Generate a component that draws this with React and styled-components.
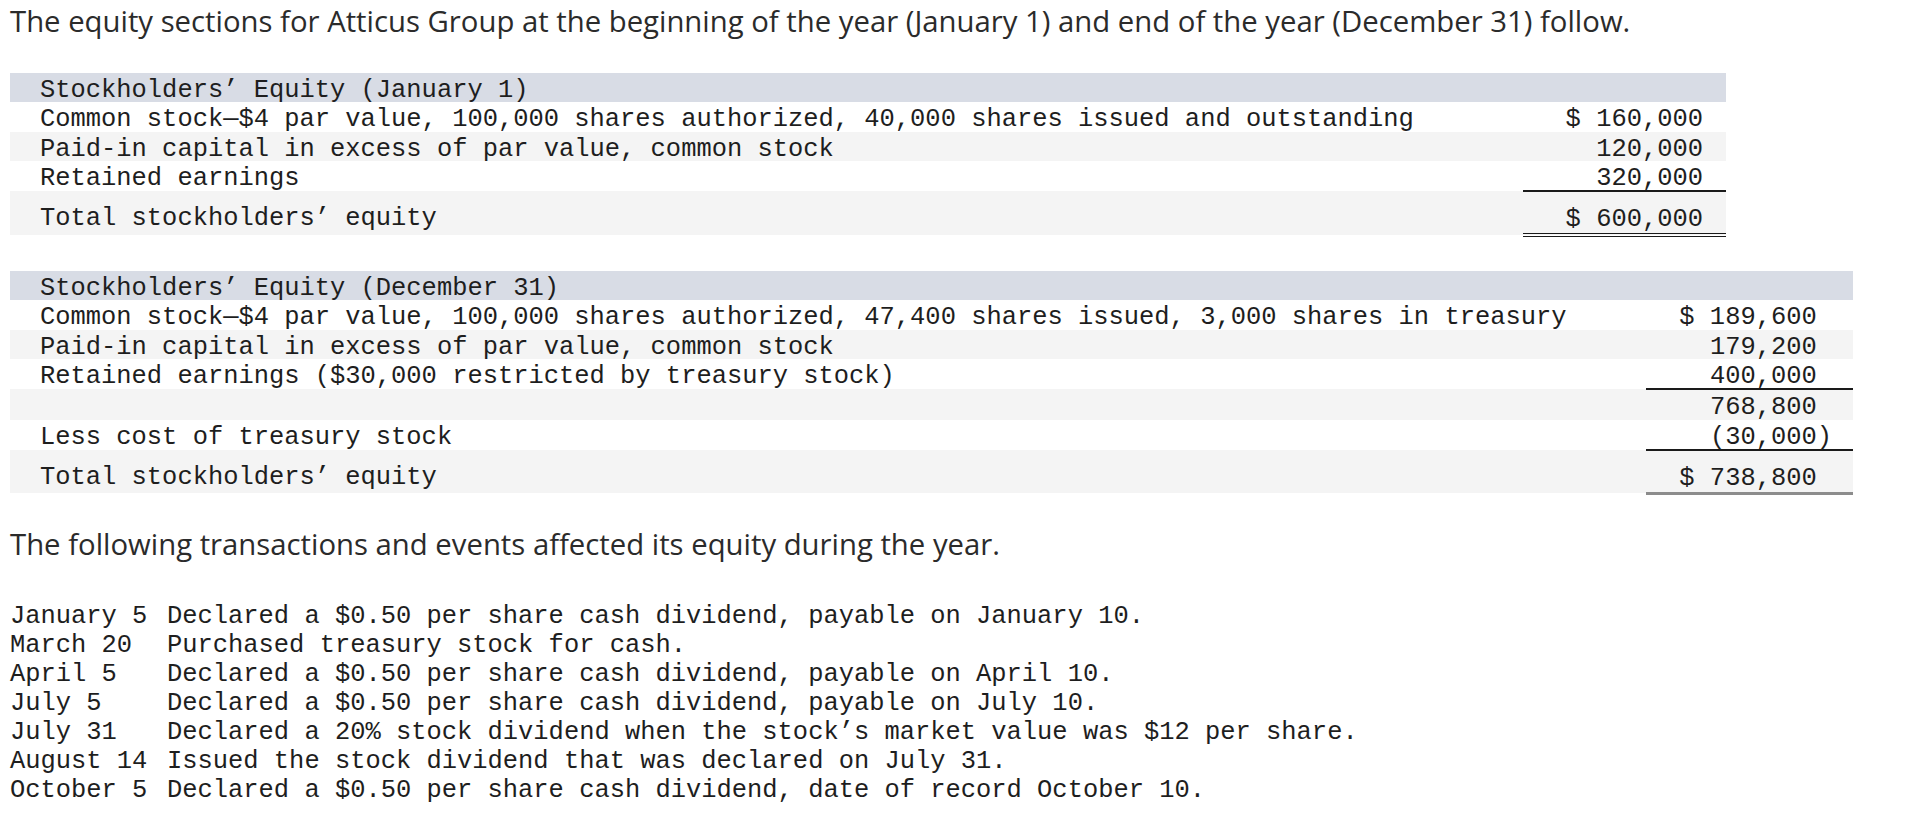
import React from 'react'
import styled, { createGlobalStyle } from 'styled-components'

const GlobalStyle = createGlobalStyle`
    body {
        margin: 0;
        background: #fff;
    }
`

const Page = styled.div`
    padding: 4px 10px 20px 10px;
    color: #222;
`

const Lead = styled.p`
    margin: 0;
    font-family: 'Open Sans', Lato, sans-serif;
    font-size: 29.3px;
    line-height: 34px;
    color: #2b2b2b;
`

const Intro = styled(Lead)`
    margin-top: 32px;
`

const Sheet = styled.table`
    margin-top: ${p => p.$top}px;
    border-collapse: collapse;
    font-family: 'Liberation Mono', 'Courier New', monospace;
    font-size: 25.45px;
    line-height: 23.3px;
    color: #1e1e1e;
`

const Row = styled.tr`
    background: ${p => (p.$head ? '#d8dce5' : p.$shade ? '#f4f4f4' : '#fff')};
`

const Label = styled.td`
    box-sizing: border-box;
    width: ${p => p.$width}px;
    padding: ${p => (p.$total ? '16px 0 1.7px 30px' : '6px 0 0 30px')};
    white-space: pre;
    vertical-align: top;
`

const Amount = styled.td`
    box-sizing: border-box;
    width: ${p => p.$width}px;
    padding: ${p => (p.$total ? '16px' : '6px')} ${p => p.$right}px ${p => (p.$total ? '1.7px' : '0')} 0;
    text-align: right;
    white-space: pre;
    vertical-align: top;
    border-bottom: ${p =>
        p.$rule === 'single'
            ? '2px solid #1a1a1a'
            : p.$rule === 'double'
            ? '4px double #1a1a1a'
            : p.$rule === 'heavy'
            ? '3px solid #8c8c8c'
            : 'none'};
`

const Paren = styled.span`
    display: inline-block;
    width: 0.6em;
    text-align: left;
`

const Events = styled.div`
    margin-top: 41px;
    display: grid;
    grid-template-columns: 157px auto;
    font-family: 'Liberation Mono', 'Courier New', monospace;
    font-size: 25.45px;
    line-height: 29px;
    color: #1e1e1e;
    white-space: pre;
`

const opening = [
    { label: 'Common stock\u2014$4 par value, 100,000 shares authorized, 40,000 shares issued and outstanding', value: '$ 160,000' },
    { label: 'Paid-in capital in excess of par value, common stock', value: '120,000', shade: true },
    { label: 'Retained earnings', value: '320,000', rule: 'single' },
    { label: 'Total stockholders\u2019 equity', value: '$ 600,000', shade: true, total: true, rule: 'double' },
]

const closing = [
    { label: 'Common stock\u2014$4 par value, 100,000 shares authorized, 47,400 shares issued, 3,000 shares in treasury', value: '$ 189,600' },
    { label: 'Paid-in capital in excess of par value, common stock', value: '179,200', shade: true },
    { label: 'Retained earnings ($30,000 restricted by treasury stock)', value: '400,000', rule: 'single' },
    { label: '', value: '768,800', shade: true },
    { label: 'Less cost of treasury stock', value: '(30,000', paren: true, rule: 'single' },
    { label: 'Total stockholders\u2019 equity', value: '$ 738,800', shade: true, total: true, rule: 'heavy' },
]

const events = [
    ['January 5', 'Declared a $0.50 per share cash dividend, payable on January 10.'],
    ['March 20', 'Purchased treasury stock for cash.'],
    ['April 5', 'Declared a $0.50 per share cash dividend, payable on April 10.'],
    ['July 5', 'Declared a $0.50 per share cash dividend, payable on July 10.'],
    ['July 31', 'Declared a 20% stock dividend when the stock\u2019s market value was $12 per share.'],
    ['August 14', 'Issued the stock dividend that was declared on July 31.'],
    ['October 5', 'Declared a $0.50 per share cash dividend, date of record October 10.'],
]

const EquityTable = ({ title, rows, top, labelWidth, valueWidth, right, trail }) => (
    <Sheet $top={top}>
        <tbody>
            <Row $head>
                <Label $width={labelWidth}>{title}</Label>
                <Amount $width={valueWidth} $right={right} />
            </Row>
            {rows.map((r, i) => (
                <Row key={i} $shade={r.shade}>
                    <Label $width={labelWidth} $total={r.total}>{r.label}</Label>
                    <Amount $width={valueWidth} $right={right} $rule={r.rule} $total={r.total}>
                        {r.value}
                        {trail && <Paren>{r.paren ? ')' : ''}</Paren>}
                    </Amount>
                </Row>
            ))}
        </tbody>
    </Sheet>
)

export default function App() {
    return (
        <Page>
            <GlobalStyle />
            <Lead>
                The equity sections for Atticus Group at the beginning of the year (January 1) and end of the year (December 31) follow.
            </Lead>
            <EquityTable
                title={'Stockholders\u2019 Equity (January 1)'}
                rows={opening}
                top={35}
                labelWidth={1513}
                valueWidth={203}
                right={23}
            />
            <EquityTable
                title={'Stockholders\u2019 Equity (December 31)'}
                rows={closing}
                top={34}
                labelWidth={1636}
                valueWidth={207}
                right={21}
                trail
            />
            <Intro>The following transactions and events affected its equity during the year.</Intro>
            <Events>
                {events.map(([date, text]) => (
                    <React.Fragment key={date}>
                        <span>{date}</span>
                        <span>{text}</span>
                    </React.Fragment>
                ))}
            </Events>
        </Page>
    )
}
